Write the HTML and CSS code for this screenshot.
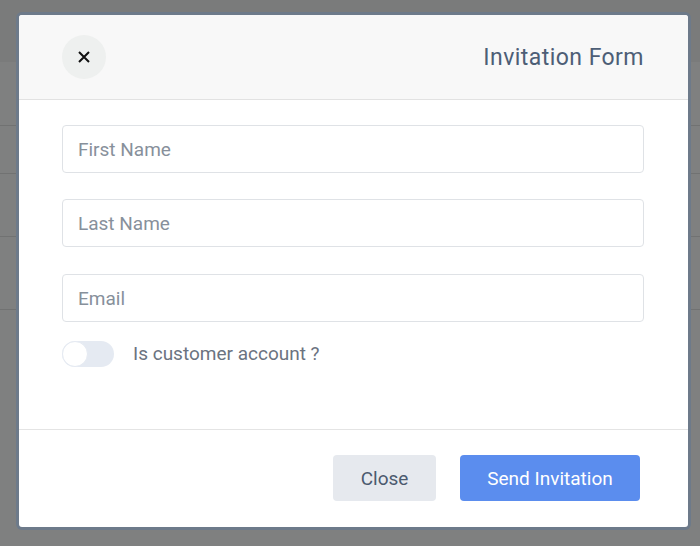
FILE: index.html
```html
<!DOCTYPE html>
<html>
<head>
<meta charset="utf-8">
<link rel="stylesheet" href="styles.css">
</head>
<body>
<div class="page">
  <div class="page-header"></div>
  <div class="page-row r1"></div>
  <div class="page-row r2"></div>
  <div class="page-row r3"></div>
  <div class="page-row r4"></div>
</div>
<div class="modal">
  <div class="modal-header">
    <button class="icon-close" aria-label="close">
      <svg width="12" height="12" viewBox="0 0 12 12"><path d="M1 1 L11 11 M11 1 L1 11" stroke="#111" stroke-width="2" fill="none"/></svg>
    </button>
    <h2 class="modal-title">Invitation Form</h2>
  </div>
  <div class="modal-body">
    <input class="field" type="text" placeholder="First Name">
    <input class="field" type="text" placeholder="Last Name">
    <input class="field" type="text" placeholder="Email">
    <label class="switch-row">
      <span class="switch"><span class="knob"></span></span>
      <span class="switch-label">Is customer account ?</span>
    </label>
  </div>
  <div class="modal-footer">
    <button class="btn btn-secondary">Close</button>
    <button class="btn btn-primary">Send Invitation</button>
  </div>
</div>
</body>
</html>
```

FILE: styles.css
```css
* { box-sizing: border-box; }
html, body { margin: 0; padding: 0; }
body {
  width: 700px;
  height: 546px;
  overflow: hidden;
  background: #7f8080;
  font-family: Roboto, "Liberation Sans", sans-serif;
  position: relative;
}
.page-header {
  height: 62px;
  background: #7a7b7b;
}
.page-row {
  border-bottom: 1px solid #717272;
}
.r1 { height: 64px; }
.r2 { height: 48px; }
.r3 { height: 63px; }
.r4 { height: 73px; }

.modal {
  position: absolute;
  left: 19px;
  top: 15px;
  width: 669px;
  height: 512px;
  background: #fff;
  border-radius: 3px;
  box-shadow: 0 0 0 3px #6d7a8a;
  display: flex;
  flex-direction: column;
}
.modal-header {
  height: 85px;
  background: #f8f8f8;
  border-bottom: 1px solid #e2e2e2;
  border-radius: 3px 3px 0 0;
  display: flex;
  align-items: center;
  justify-content: space-between;
  padding: 0 44px 0 43px;
}
.icon-close {
  width: 44px;
  height: 44px;
  border-radius: 50%;
  border: none;
  background: #eef0ef;
  display: flex;
  align-items: center;
  justify-content: center;
  padding: 0;
}
.modal-title {
  margin: 0;
  font-weight: 400;
  font-size: 23px;
  color: #4d5e76;
  letter-spacing: 0.45px;
}
.modal-body {
  padding: 25px 44px 0 43px;
  display: flex;
  flex-direction: column;
  height: 330px;
  border-bottom: 1px solid #e4e4e4;
}
.field {
  height: 48px;
  border: 1px solid #dfe2e6;
  border-radius: 4px;
  padding: 0 15px;
  font-family: Roboto, "Liberation Sans", sans-serif;
  font-size: 19px;
  color: #333;
  margin-bottom: 26px;
  outline: none;
}
.field::placeholder { color: #87909b; }
.field:nth-of-type(2) { margin-bottom: 27px; }
.field:nth-of-type(3) { margin-bottom: 19px; }
.switch-row {
  display: flex;
  align-items: center;
}
.switch {
  width: 52px;
  height: 26px;
  border-radius: 13px;
  background: #e5eaf2;
  position: relative;
  display: block;
}
.knob {
  position: absolute;
  left: 0;
  top: 0;
  width: 26px;
  height: 26px;
  border-radius: 50%;
  background: #fff;
  border: 1px solid #e5eaf2;
}
.switch-label {
  margin-left: 19px;
  font-size: 19px;
  color: #6b7380;
  margin-top: -2px;
}
.modal-footer {
  flex: 1;
  display: flex;
  justify-content: flex-end;
  align-items: flex-start;
  padding: 25px 48px 0 0;
  gap: 24px;
}
.btn {
  height: 46px;
  border: none;
  border-radius: 4px;
  font-family: Roboto, "Liberation Sans", sans-serif;
  font-size: 19px;
}
.btn-secondary {
  width: 103px;
  background: #e6e9ee;
  color: #4b5a6e;
}
.btn-primary {
  width: 180px;
  background: #5b8dee;
  color: #fff;
}
```
